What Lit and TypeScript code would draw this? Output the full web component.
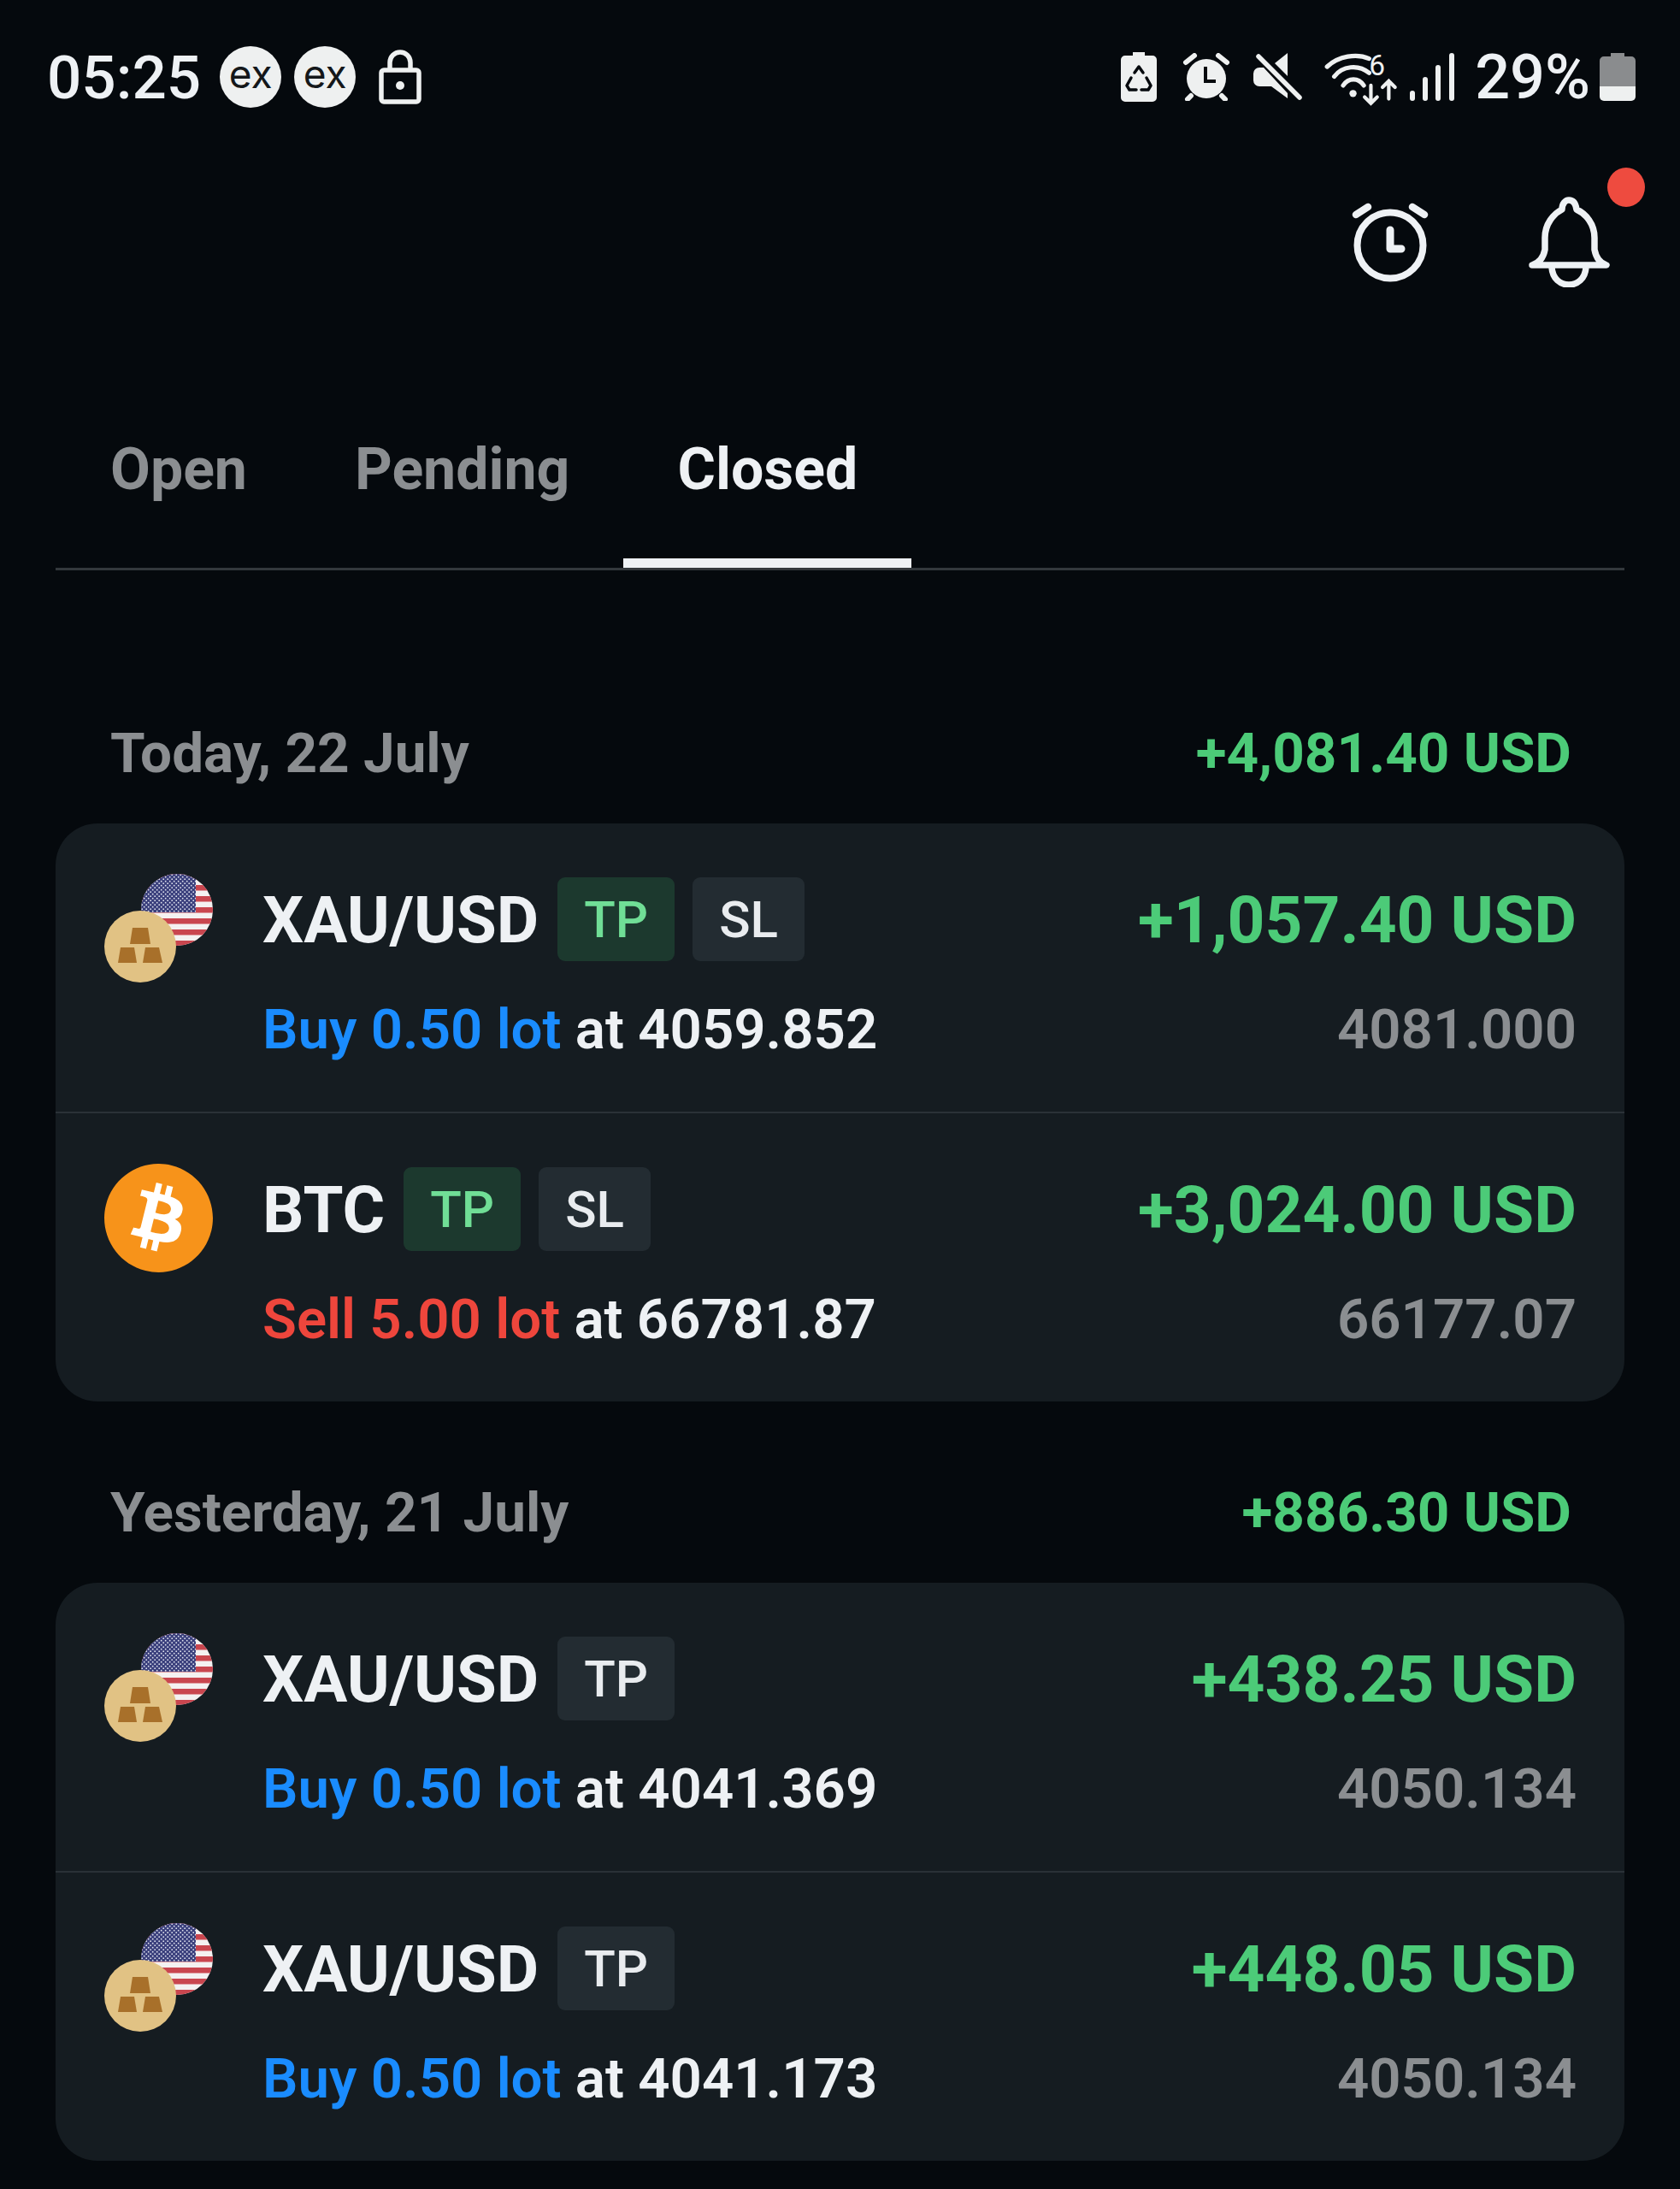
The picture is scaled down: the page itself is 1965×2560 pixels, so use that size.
import { LitElement, css, html, svg } from "lit";
import { customElement } from "lit/decorators.js";

type Trade = {
  asset: "xau" | "btc";
  symbol: string;
  tags: { label: string; active?: boolean }[];
  profit: string;
  side: "buy" | "sell";
  size: string;
  open: string;
  close: string;
};

type Day = { label: string; total: string; trades: Trade[] };

const days: Day[] = [
  {
    label: "Today, 22 July",
    total: "+4,081.40 USD",
    trades: [
      {
        asset: "xau",
        symbol: "XAU/USD",
        tags: [{ label: "TP", active: true }, { label: "SL" }],
        profit: "+1,057.40 USD",
        side: "buy",
        size: "Buy 0.50 lot",
        open: "4059.852",
        close: "4081.000",
      },
      {
        asset: "btc",
        symbol: "BTC",
        tags: [{ label: "TP", active: true }, { label: "SL" }],
        profit: "+3,024.00 USD",
        side: "sell",
        size: "Sell 5.00 lot",
        open: "66781.87",
        close: "66177.07",
      },
    ],
  },
  {
    label: "Yesterday, 21 July",
    total: "+886.30 USD",
    trades: [
      {
        asset: "xau",
        symbol: "XAU/USD",
        tags: [{ label: "TP" }],
        profit: "+438.25 USD",
        side: "buy",
        size: "Buy 0.50 lot",
        open: "4041.369",
        close: "4050.134",
      },
      {
        asset: "xau",
        symbol: "XAU/USD",
        tags: [{ label: "TP" }],
        profit: "+448.05 USD",
        side: "buy",
        size: "Buy 0.50 lot",
        open: "4041.173",
        close: "4050.134",
      },
    ],
  },
];

const tabs = ["Open", "Pending", "Closed"];

let flagId = 0;

const flagIcon = () => {
  const id = `flag-${flagId++}`;
  return html`<svg class="flag" viewBox="0 0 84 84">
    <defs>
      <clipPath id=${id}><circle cx="42" cy="42" r="42" /></clipPath>
      <pattern id="${id}-s" width="5" height="5" patternUnits="userSpaceOnUse">
        <circle cx="1.2" cy="1.2" r="0.9" fill="#dfe3ee" />
        <circle cx="3.7" cy="3.7" r="0.9" fill="#dfe3ee" />
      </pattern>
    </defs>
    <g clip-path="url(#${id})">
      <rect width="84" height="84" fill="#f4f1f1" />
      ${[0, 1, 2, 3, 4, 5, 6].map(
        (i) => svg`<rect y=${i * 13} width="84" height="6.5" fill="#c9464f" />`,
      )}
      <rect width="64" height="45" fill="#3a3f7c" />
      <rect width="64" height="45" fill="url(#${id}-s)" />
    </g>
  </svg>`;
};

const goldIcon = html`<svg class="gold" viewBox="0 0 84 84">
  <circle cx="42" cy="42" r="42" fill="#e1c284" />
  <path d="M33 20h18l3 19H30z" fill="#a8702a" />
  <path d="M19 43h16l3 18H16z" fill="#a8702a" />
  <path d="M48 43h16l4 18H45z" fill="#a8702a" />
</svg>`;

const btcIcon = html`<svg class="btc" viewBox="0 0 24 24">
  <circle cx="12" cy="12" r="10" fill="#fff" />
  <path
    fill="#f7931a"
    d="M23.638 14.904c-1.602 6.43-8.113 10.34-14.542 8.736C2.67 22.05-1.244 15.525.362 9.105 1.962 2.67 8.475-1.243 14.9.358c6.43 1.605 10.342 8.115 8.738 14.548v-.002zm-6.35-4.613c.24-1.59-.974-2.45-2.64-3.03l.54-2.153-1.315-.33-.525 2.107c-.345-.087-.705-.167-1.064-.25l.526-2.127-1.32-.33-.54 2.165c-.285-.067-.565-.132-.84-.2l-1.815-.45-.35 1.407s.975.225.955.236c.535.136.63.486.615.766l-1.477 5.92c-.075.166-.24.406-.614.314.015.02-.96-.24-.96-.24l-.66 1.51 1.71.426.93.242-.54 2.19 1.32.327.54-2.17c.36.1.705.19 1.05.273l-.51 2.154 1.32.33.545-2.19c2.24.427 3.93.257 4.64-1.774.57-1.637-.03-2.58-1.217-3.196.854-.193 1.5-.76 1.68-1.93h.01zm-3.01 4.22c-.404 1.64-3.157.75-4.05.53l.72-2.9c.896.23 3.757.67 3.33 2.37zm.41-4.24c-.37 1.49-2.662.735-3.405.55l.654-2.64c.744.18 3.137.524 2.75 2.084v.006z"
  />
</svg>`;

@customElement("app-root")
export class AppRoot extends LitElement {
  static styles = css`
    :host {
      display: block;
      width: 1965px;
      height: 2560px;
      overflow: hidden;
      background: #05090d;
      color: #eef1f4;
      font-family: Roboto, "Noto Sans", sans-serif;
    }

    svg {
      display: block;
      flex: none;
    }

    .status {
      display: flex;
      align-items: center;
      height: 180px;
      padding: 0 52px 0 55px;
    }

    .time {
      font-size: 71px;
      font-weight: 500;
      margin-right: 22px;
    }

    .ex {
      display: flex;
      align-items: center;
      justify-content: center;
      width: 72px;
      height: 72px;
      margin-right: 15px;
      border-radius: 50%;
      background: #eef0f0;
      color: #14171a;
      font-family: Inter, sans-serif;
      font-size: 46px;
      padding-bottom: 8px;
      box-sizing: border-box;
    }

    .lock {
      width: 50px;
      height: 64px;
      margin-left: 12px;
    }

    .right {
      display: flex;
      align-items: center;
      margin-left: auto;
    }

    .i-recycle {
      width: 42px;
      height: 58px;
      margin-right: 30px;
    }

    .i-alarm {
      width: 56px;
      height: 56px;
      margin-right: 27px;
    }

    .i-mute {
      width: 57px;
      height: 56px;
      margin-right: 26px;
    }

    .i-wifi {
      width: 88px;
      height: 69px;
      margin-right: 12px;
    }

    .i-signal {
      width: 53px;
      height: 56px;
      margin-right: 23px;
    }

    .pct {
      font-size: 72px;
      font-weight: 500;
      margin-right: 11px;
    }

    .i-battery {
      width: 42px;
      height: 56px;
    }

    .actions {
      display: flex;
      align-items: center;
      justify-content: flex-end;
      height: 206px;
      padding-right: 80px;
      gap: 112px;
    }

    .alarm {
      width: 96px;
      height: 98px;
    }

    .bell-wrap {
      position: relative;
    }

    .bell {
      width: 98px;
      height: 106px;
    }

    .dot {
      position: absolute;
      top: -34px;
      right: -39px;
      width: 44px;
      height: 46px;
      border-radius: 50%;
      background: #ee4b3f;
    }

    .tabs {
      display: flex;
      margin: 64px 65px 0;
      padding-left: 1px;
      border-bottom: 3px solid #33383c;
    }

    .tab {
      position: relative;
      padding: 0 63px;
      height: 214px;
      line-height: 198px;
      font-size: 68px;
      font-weight: 700;
      color: #8b8e91;
    }

    .tab.on {
      color: #eef1f4;
    }

    .tab.on::after {
      content: "";
      position: absolute;
      left: 0;
      right: 0;
      bottom: 0;
      height: 11px;
      background: #eef1f4;
    }

    .day {
      margin: 0 65px 97px;
    }

    .day:first-of-type {
      margin-top: 181px;
    }

    .day-head {
      display: flex;
      justify-content: space-between;
      align-items: center;
      height: 64px;
      padding: 0 62px 0 64px;
      margin-bottom: 51px;
      font-size: 65.6px;
      font-weight: 700;
      color: #8b8e91;
    }

    .day-head .total {
      color: #4ccb78;
    }

    .card {
      border-radius: 49px;
      background: #151c21;
    }

    .row {
      display: flex;
      padding: 63px 56px 60px 57px;
      height: 337px;
      box-sizing: border-box;
    }

    .row + .row {
      height: 339px;
      border-top: 2px solid #2a3137;
    }

    .asset {
      position: relative;
      flex: none;
      width: 127px;
      height: 127px;
      margin: -4px 58px 0 0;
    }

    .flag {
      position: absolute;
      top: 0;
      right: 0;
      width: 84px;
      height: 84px;
    }

    .gold {
      position: absolute;
      left: 0;
      bottom: 0;
      width: 84px;
      height: 84px;
    }

    .btc {
      width: 127px;
      height: 127px;
    }

    .info {
      flex: 1;
      display: flex;
      flex-direction: column;
      gap: 42px;
    }

    .line {
      display: flex;
      align-items: center;
    }

    .top {
      height: 98px;
    }

    .bottom {
      height: 74px;
      font-size: 65.4px;
      font-weight: 600;
      white-space: pre;
    }

    .symbol {
      font-size: 76px;
      font-weight: 700;
      margin-right: 22px;
      padding-top: 2px;
    }

    .tag {
      display: flex;
      align-items: center;
      justify-content: center;
      height: 98px;
      padding: 0 31px;
      box-sizing: border-box;
      margin-right: 21px;
      border-radius: 9px;
      background: #232c32;
      color: #e9ecef;
      font-size: 60px;
      font-weight: 500;
    }

    .tag.on {
      background: #1c392e;
      color: #70de96;
    }

    .profit {
      margin-left: auto;
      padding-top: 2px;
      font-size: 76.6px;
      font-weight: 700;
      color: #4ccb78;
    }

    .buy {
      color: #1a8cff;
    }

    .sell {
      color: #ee463c;
    }

    .close {
      margin-left: auto;
      color: #8b8e91;
    }
  `;

  private renderTrade(t: Trade) {
    return html`
      <div class="row">
        <div class="asset">
          ${t.asset === "xau" ? html`${flagIcon()}${goldIcon}` : btcIcon}
        </div>
        <div class="info">
          <div class="line top">
            <span class="symbol">${t.symbol}</span>
            ${t.tags.map(
              (tag) => html`<span class="tag ${tag.active ? "on" : ""}">${tag.label}</span>`,
            )}
            <span class="profit">${t.profit}</span>
          </div>
          <div class="line bottom">
            <span class=${t.side}>${t.size}</span><span> at ${t.open}</span>
            <span class="close">${t.close}</span>
          </div>
        </div>
      </div>
    `;
  }

  render() {
    return html`
      <div class="status">
        <span class="time">05:25</span>
        <span class="ex">ex</span>
        <span class="ex">ex</span>
        <svg class="lock" viewBox="0 0 50 64" fill="none" stroke="#eef0f0" stroke-width="5.5">
          <rect x="3" y="24" width="44" height="37" rx="3" />
          <path d="M13 24v-9a12 12 0 0 1 24 0v9" />
          <circle cx="25" cy="42" r="5" fill="#eef0f0" stroke="none" />
        </svg>
        <div class="right">
          <svg class="i-recycle" viewBox="0 0 42 58">
            <path
              fill="#eef0f0"
              d="M14 0h14v4h9a5 5 0 0 1 5 5v44a5 5 0 0 1-5 5H5a5 5 0 0 1-5-5V9a5 5 0 0 1 5-5h9z"
            />
            <path
              fill="none"
              stroke="#05090d"
              stroke-width="3.5"
              stroke-linecap="round"
              stroke-linejoin="round"
              d="M16 24l5-7 5 7M12 30l-5 9 3 5h8M30 30l5 9-3 5h-8"
            />
          </svg>
          <svg class="i-alarm" viewBox="0 0 56 56">
            <circle cx="28" cy="30" r="23" fill="#eef0f0" />
            <path
              stroke="#eef0f0"
              stroke-width="6"
              stroke-linecap="round"
              d="M4 11L14 3M52 11L42 3M10 50l-4 4M46 50l4 4"
            />
            <path
              fill="none"
              stroke="#05090d"
              stroke-width="4"
              stroke-linecap="square"
              d="M27 18v15h10"
            />
          </svg>
          <svg class="i-mute" viewBox="0 0 57 56">
            <path fill="#eef0f0" d="M40 0v27L25 12z" />
            <path fill="#eef0f0" d="M7 17h5l28 30v6L21 39H7a7 7 0 0 1-7-7V24a7 7 0 0 1 7-7z" />
            <path stroke="#eef0f0" stroke-width="5.5" stroke-linecap="round" d="M6 4l48 48" />
          </svg>
          <svg class="i-wifi" viewBox="0 -6 84 66" fill="none" stroke="#eef0f0" stroke-linecap="round">
            <path stroke-width="5" d="M3 15C16 3 36 0 50 6" />
            <path stroke-width="5" d="M11 26C20 14 38 12 50 22" />
            <path stroke-width="5" d="M21 36C27 27 38 27 44 36" />
            <circle cx="32" cy="45" r="4" fill="#eef0f0" stroke="none" />
            <text x="50" y="25" font-size="32" font-family="Roboto" fill="#eef0f0" stroke="none">6</text>
            <path stroke-width="4" d="M52 36v20M45 49l7 7 7-7M72 51V31M65 38l7-7 7 7" />
          </svg>
          <svg class="i-signal" viewBox="0 0 53 56" fill="#eef0f0">
            <rect x="0" y="44" width="6" height="12" rx="3" />
            <rect x="15" y="28" width="6" height="28" rx="3" />
            <rect x="30" y="14" width="6" height="42" rx="3" />
            <rect x="46" y="0" width="6" height="56" rx="3" />
          </svg>
          <span class="pct">29%</span>
          <svg class="i-battery" viewBox="0 0 42 56">
            <path fill="#8a8c8e" d="M13 0h16v4h8a5 5 0 0 1 5 5v30H0V9a5 5 0 0 1 5-5h8z" />
            <path fill="#eef0f0" d="M0 39h42v12a5 5 0 0 1-5 5H5a5 5 0 0 1-5-5z" />
          </svg>
        </div>
      </div>

      <div class="actions">
        <svg class="alarm" viewBox="0 0 96 98" fill="none" stroke="#eef1f4" stroke-linecap="round">
          <circle cx="47" cy="53" r="38.5" stroke-width="8" />
          <path stroke-width="8.5" d="M7 17L21 8M73 8l14 9" />
          <path stroke-width="9" stroke-linejoin="round" d="M47 35v22h13" />
        </svg>
        <div class="bell-wrap">
          <svg class="bell" viewBox="0 0 98 106" fill="none" stroke="#eef1f4" stroke-width="7.5" stroke-linejoin="round">
            <path
              d="M5 80C12 78 18 72 20 62V48C20 32 30 20 40 15C40 8 44 4 48 4C53 4 56 8 57 15C68 20 78 32 78 48V62C80 72 85 78 92 80Z"
            />
            <path d="M28 83c1 13 10 20 20 20s19-7 20-20" />
          </svg>
          <span class="dot"></span>
        </div>
      </div>

      <div class="tabs">
        ${tabs.map((t) => html`<div class="tab ${t === "Closed" ? "on" : ""}">${t}</div>`)}
      </div>

      ${days.map(
        (d) => html`
          <section class="day">
            <div class="day-head"><span>${d.label}</span><span class="total">${d.total}</span></div>
            <div class="card">${d.trades.map((t) => this.renderTrade(t))}</div>
          </section>
        `,
      )}
    `;
  }
}

declare global {
  interface HTMLElementTagNameMap {
    "app-root": AppRoot;
  }
}
